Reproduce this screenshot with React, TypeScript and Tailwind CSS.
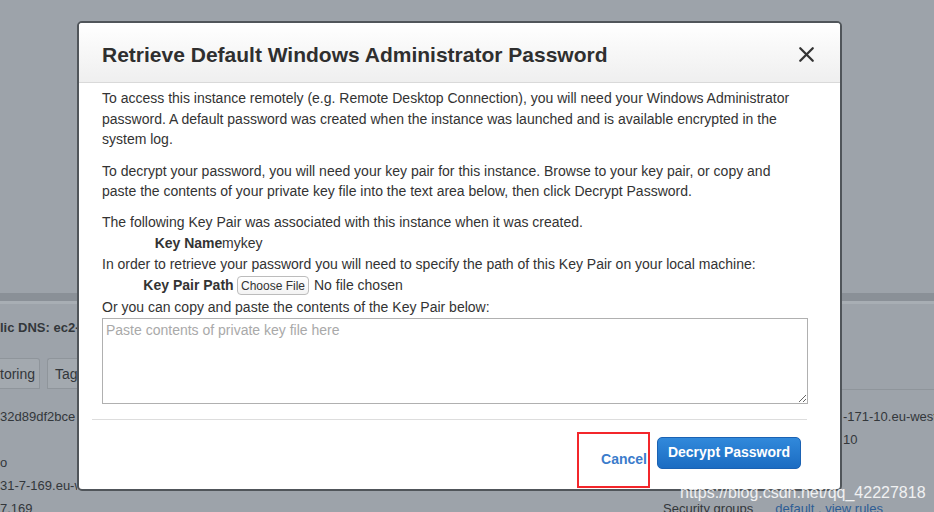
import React from 'react';
import { X } from 'lucide-react';

const font = "font-['Liberation_Sans','Helvetica_Neue',Arial,sans-serif]";

function PageBehind() {
  return (
    <div className="flex flex-col pt-[293px] text-[13px] leading-[16px] text-[#33373b]">
      <div className="h-[8px] bg-[#8a9097]" />
      <div className="h-[3px] bg-[#a8aeb4]" />
      <div className="flex h-[86px]">
        <div className="w-[77px] overflow-hidden whitespace-nowrap">
          <div className="mt-[16px] font-bold">lic DNS: ec2-52-31</div>
          <div className="mt-[22px] flex gap-[7px]">
            <div className="flex h-[31px] w-[45px] items-center justify-end rounded-tr-[3px] border border-l-0 border-[#8f959b] bg-[#a3a9af] pr-[4px] text-[14px]">
              toring
            </div>
            <div className="flex h-[31px] w-[40px] items-center rounded-tl-[3px] border border-r-0 border-[#8f959b] bg-[#a3a9af] pl-[7px] text-[14px]">
              Tags
            </div>
          </div>
        </div>
        <div className="flex-1" />
        <div className="flex w-[92px] flex-col justify-end">
          <div className="h-px bg-[#8f959b]" />
        </div>
      </div>
      <div className="mt-[15px] flex h-[23px] items-center">
        <div className="w-[77px] overflow-hidden whitespace-nowrap">32d89df2bce</div>
        <div className="flex-1" />
        <div className="w-[91px] overflow-hidden whitespace-nowrap">-171-10.eu-west</div>
      </div>
      <div className="flex h-[23px] items-center">
        <div className="w-[77px]" />
        <div className="flex-1" />
        <div className="w-[91px] overflow-hidden whitespace-nowrap">10</div>
      </div>
      <div className="flex h-[23px] items-center">
        <div className="w-[77px] overflow-hidden whitespace-nowrap">o</div>
      </div>
      <div className="flex h-[23px] items-center">
        <div className="w-[77px] overflow-hidden whitespace-nowrap">31-7-169.eu-west</div>
      </div>
      <div className="flex h-[23px] items-center">
        <div className="w-[77px] overflow-hidden whitespace-nowrap">7.169</div>
        <div className="ml-[586px] whitespace-nowrap">Security groups</div>
        <div className="ml-[22px] whitespace-nowrap text-[#2e5d95]">default . view rules</div>
      </div>
    </div>
  );
}

function PasswordModal() {
  return (
    <div className="absolute left-[77px] top-[21px] flex h-[470px] w-[765px] flex-col overflow-hidden rounded-[5px] border-2 border-[#50555a] bg-white text-[#333]">
      <div className="flex h-[60px] shrink-0 items-center justify-between border-b border-[#d9d9d9] bg-gradient-to-b from-white to-[#efefef] pl-[23px] pr-[21px] pt-[4px]">
        <h1 className="text-[21px] font-bold text-[#2f2f2f]">Retrieve Default Windows Administrator Password</h1>
        <X size={25} strokeWidth={2.2} className="text-[#333]" />
      </div>

      <div className="pl-[23px] pr-[32px] pt-[5px] text-[14px] leading-[20.5px]">
        <p className="mb-[11px]">
          To access this instance remotely (e.g. Remote Desktop Connection), you will need your Windows Administrator
          <br />
          password. A default password was created when the instance was launched and is available encrypted in the
          <br />
          system log.
        </p>
        <p className="mb-[10px]">
          To decrypt your password, you will need your key pair for this instance. Browse to your key pair, or copy and
          <br />
          paste the contents of your private key file into the text area below, then click Decrypt Password.
        </p>
        <div className="leading-[21px]">
          <div>The following Key Pair was associated with this instance when it was created.</div>
          <div className="flex">
            <span className="ml-[39px] w-[95px] text-center font-bold">Key Name</span>
            <span className="-ml-[14px]">mykey</span>
          </div>
          <div>In order to retrieve your password you will need to specify the path of this Key Pair on your local machine:</div>
          <div className="flex h-[22px] items-center">
            <span className="ml-[39px] w-[95px] text-center font-bold">Key Pair Path</span>
            <span className="ml-[1px] flex h-[19px] w-[72px] items-center justify-center rounded-[4px] border border-[#bcbcbc] bg-gradient-to-b from-white to-[#f3f3f3] text-[12px] leading-none text-[#333]">
              Choose File
            </span>
            <span className="ml-[5px]">No file chosen</span>
          </div>
          <div>Or you can copy and paste the contents of the Key Pair below:</div>
        </div>
        <textarea
          className="block h-[86px] w-full resize border border-[#b0b0b0] px-[3px] py-[2px] text-[14px] leading-[18px] outline-none placeholder:text-[#a9a9a9]"
          placeholder="Paste contents of private key file here"
        />
      </div>

      <div className="ml-[13px] mr-[33px] mt-[15px] h-px bg-[#dddddd]" />

      <div className="flex justify-end pr-[39px] pt-[12px]">
        <div className="flex h-[56px] w-[73px] items-center justify-end border-2 border-[#f3262b] pr-[1px]">
          <span className="text-[14px] font-bold text-[#3b7ccb]">Cancel</span>
        </div>
        <button className="ml-[7px] mt-[5px] h-[32px] w-[144px] rounded-[5px] border border-[#1b62b3] bg-gradient-to-b from-[#3189db] to-[#1b6cc2] text-[14px] font-bold text-white">
          Decrypt Password
        </button>
      </div>
    </div>
  );
}

export default function App() {
  return (
    <div className={`relative h-[512px] w-[934px] overflow-hidden bg-[#9da3aa] ${font}`}>
      <PageBehind />
      <PasswordModal />
      <div className="absolute left-[680px] top-[482px] whitespace-nowrap text-[16px] leading-[22px] text-white/85">
        https://blog.csdn.net/qq_42227818
      </div>
    </div>
  );
}
